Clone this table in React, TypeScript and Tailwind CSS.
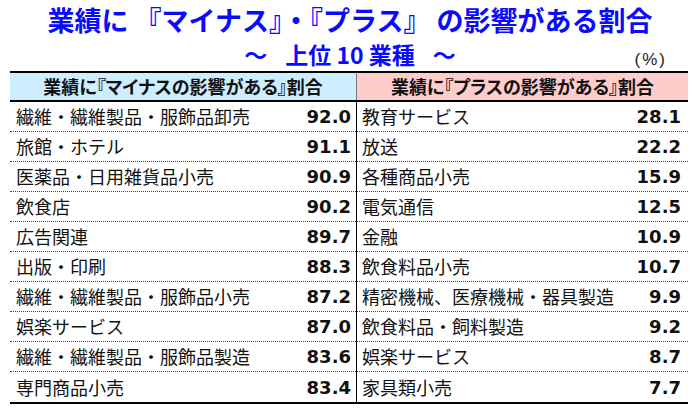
import React from "react";

const minus = [
  { name: "繊維・繊維製品・服飾品卸売", value: "92.0" },
  { name: "旅館・ホテル", value: "91.1" },
  { name: "医薬品・日用雑貨品小売", value: "90.9" },
  { name: "飲食店", value: "90.2" },
  { name: "広告関連", value: "89.7" },
  { name: "出版・印刷", value: "88.3" },
  { name: "繊維・繊維製品・服飾品小売", value: "87.2" },
  { name: "娯楽サービス", value: "87.0" },
  { name: "繊維・繊維製品・服飾品製造", value: "83.6" },
  { name: "専門商品小売", value: "83.4" },
];

const plus = [
  { name: "教育サービス", value: "28.1" },
  { name: "放送", value: "22.2" },
  { name: "各種商品小売", value: "15.9" },
  { name: "電気通信", value: "12.5" },
  { name: "金融", value: "10.9" },
  { name: "飲食料品小売", value: "10.7" },
  { name: "精密機械、医療機械・器具製造", value: "9.9" },
  { name: "飲食料品・飼料製造", value: "9.2" },
  { name: "娯楽サービス", value: "8.7" },
  { name: "家具類小売", value: "7.7" },
];

const jp = "font-['Noto_Sans_CJK_JP','Noto_Sans',sans-serif]";

function Column({
  rows,
  className,
  pad,
}: {
  rows: { name: string; value: string }[];
  className: string;
  pad: string;
}) {
  return (
    <div className={className}>
      {rows.map((row, i) => (
        <div
          key={i}
          className={`flex h-[30px] items-center justify-between ${pad} ${
            i < rows.length - 1 ? "border-b border-dotted border-[#444]" : ""
          }`}
        >
          <span className="text-[18px] text-[#111]">{row.name}</span>
          <span className="text-[18px] font-bold text-[#111] font-['DejaVu_Sans',sans-serif]">
            {row.value}
          </span>
        </div>
      ))}
    </div>
  );
}

export default function App() {
  return (
    <div className={`w-[700px] h-[420px] bg-white overflow-hidden ${jp}`}>
      {/* title */}
      <div className="pt-[3px] text-center font-bold text-[#0a0aff] text-[27px] leading-[34px]">
        業績に 『マイナス』・『プラス』 の影響がある割合
      </div>
      <div className="grid grid-cols-[1fr_auto_1fr] h-[34px]">
        <div />
        <div className="flex items-center gap-[18px] font-bold text-[#0a0aff] text-[23px] leading-[30px]">
          <span>～</span>
          <span>上位 10 業種</span>
          <span>～</span>
        </div>
        <div className="flex items-end justify-end pr-[33px] pb-[3px] text-[17px] leading-[17px] tracking-[2px] text-[#222] font-['Liberation_Sans',sans-serif]">
          (%)
        </div>
      </div>

      {/* table */}
      <div className="mx-[10px] w-[678px] border-y-2 border-black">
        <div className="flex h-[29px] border-b-2 border-black text-[18px] font-bold text-[#111] [font-feature-settings:'palt']">
          <div className="w-[347px] bg-[#cdeeff] flex items-center justify-center border-r border-[#7a7a7a]">
            業績に『マイナスの影響がある』割合
          </div>
          <div className="flex-1 bg-[#ffcccc] flex items-center justify-center">
            業績に『プラスの影響がある』割合
          </div>
        </div>
        <div className="flex">
          <Column rows={minus} className="w-[347px] border-r border-black" pad="pl-[6px] pr-[5px]" />
          <Column rows={plus} className="flex-1" pad="pl-[5px] pr-[7px]" />
        </div>
      </div>
    </div>
  );
}
